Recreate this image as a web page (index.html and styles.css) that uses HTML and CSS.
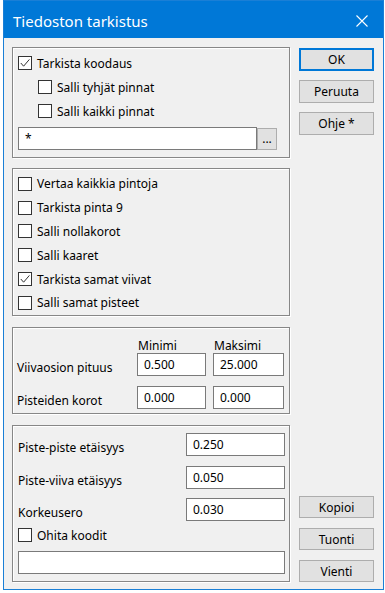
FILE: index.html
```html
<!DOCTYPE html>
<html>

<head>
<meta charset="UTF-8">
<link rel="stylesheet" href="styles.css">
</head>

<body>
<div class="window">
    <div class="titlebar">
        <span class="title">Tiedoston tarkistus</span>
        <svg class="close" width="12" height="12" viewBox="0 0 12 12">
            <path d="M0.5 0.5 L11.5 11.5 M11.5 0.5 L0.5 11.5" stroke="#fff" stroke-width="1.1" fill="none"/>
        </svg>
    </div>

    <div class="client">
        <div class="groups">

            <div class="group coding">
                <label class="check"><span class="box"><svg width="12" height="12" viewBox="0 0 12 12"><path d="M1.8 6 L4.6 9.2 L10.4 2.4" stroke="#333" stroke-width="1" fill="none"/></svg></span>Tarkista koodaus</label>
                <label class="check sub"><span class="box"></span>Salli tyhjät pinnat</label>
                <label class="check sub"><span class="box"></span>Salli kaikki pinnat</label>
                <div class="pattern-row">
                    <input class="field pattern" type="text" value="*">
                    <button class="btn browse">...</button>
                </div>
            </div>

            <div class="group options">
                <label class="check"><span class="box"></span>Vertaa kaikkia pintoja</label>
                <label class="check"><span class="box"></span>Tarkista pinta 9</label>
                <label class="check"><span class="box"></span>Salli nollakorot</label>
                <label class="check"><span class="box"></span>Salli kaaret</label>
                <label class="check"><span class="box"><svg width="12" height="12" viewBox="0 0 12 12"><path d="M1.8 6 L4.6 9.2 L10.4 2.4" stroke="#333" stroke-width="1" fill="none"/></svg></span>Tarkista samat viivat</label>
                <label class="check"><span class="box"></span>Salli samat pisteet</label>
            </div>

            <div class="group limits">
                <span></span>
                <span class="col-head">Minimi</span>
                <span class="col-head">Maksimi</span>

                <span class="row-label">Viivaosion pituus</span>
                <input class="field" type="text" value="0.500">
                <input class="field" type="text" value="25.000">

                <span class="row-label">Pisteiden korot</span>
                <input class="field" type="text" value="0.000">
                <input class="field" type="text" value="0.000">
            </div>

            <div class="group tolerances">
                <div class="tol-row">
                    <span class="row-label">Piste-piste etäisyys</span>
                    <input class="field tol" type="text" value="0.250">
                </div>
                <div class="tol-row">
                    <span class="row-label">Piste-viiva etäisyys</span>
                    <input class="field tol" type="text" value="0.050">
                </div>
                <div class="tol-row">
                    <span class="row-label">Korkeusero</span>
                    <input class="field tol" type="text" value="0.030">
                </div>
                <label class="check skip"><span class="box"></span>Ohita koodit</label>
                <input class="field codes" type="text" value="">
            </div>

        </div>

        <div class="actions">
            <div class="stack top">
                <button class="btn default">OK</button>
                <button class="btn">Peruuta</button>
                <button class="btn">Ohje *</button>
            </div>
            <div class="stack bottom">
                <button class="btn">Kopioi</button>
                <button class="btn">Tuonti</button>
                <button class="btn">Vienti</button>
            </div>
        </div>
    </div>
</div>
</body>

</html>
```

FILE: styles.css
```css
body
{
    margin: 0;
    background: #ffffff;
    font-family: "Noto Sans", "Open Sans", sans-serif;
    font-size: 12px;
    color: #000;
}

.window
{
    margin-left: 3px;
    width: 381px;
    height: 590px;
    box-sizing: border-box;
    border: 1px solid #1a7fd6;
    background: #f0f0f0;
    display: flex;
    flex-direction: column;
}

.titlebar
{
    height: 37px;
    flex: none;
    background: #0078d7;
    color: #fff;
    display: flex;
    align-items: center;
    justify-content: space-between;
    padding: 3px 15px 0 9px;
    box-sizing: border-box;
}

.title
{
    font-size: 15px;
}

.close
{
    display: block;
}

.client
{
    flex: 1;
    display: flex;
    gap: 9px;
    padding: 9px 9px 7px 8px;
}

.groups
{
    width: 278px;
    display: flex;
    flex-direction: column;
}

.group
{
    box-sizing: border-box;
    border: 1px solid #878787;
    box-shadow: 1px 1px 0 #fff, inset 1px 1px 0 #fff;
}

.coding
{
    height: 111px;
    padding: 3px 5px 0 5px;
}

.options
{
    height: 148px;
    margin-top: 10px;
    padding: 3px 5px 0 5px;
}

.options .check
{
    height: 23.8px;
}

/* min / max table */
.limits
{
    height: 87px;
    margin-top: 11px;
    padding: 10px 5px 0 4px;
    display: grid;
    grid-template-columns: 113px 69px 71px;
    grid-template-rows: 15px 23px 33px;
    column-gap: 7px;
}

.limits .col-head
{
    align-self: center;
    padding-left: 1px;
    line-height: 15px;
}

.limits .row-label
{
    align-self: end;
    line-height: 16px;
}

.limits .field
{
    align-self: end;
}

.tolerances
{
    height: 157px;
    margin-top: 11px;
    padding: 7px 4px 0 5px;
}

.tol-row
{
    display: flex;
    justify-content: space-between;
    align-items: flex-end;
    height: 23px;
}

.tol-row + .tol-row
{
    margin-top: 9.5px;
}

.tol-row .row-label
{
    line-height: 16px;
}

.check
{
    display: flex;
    align-items: center;
    gap: 5px;
    height: 24px;
}

.sub
{
    margin-left: 20px;
}

.skip
{
    height: 28px;
}

.box
{
    width: 14px;
    height: 14px;
    box-sizing: border-box;
    border: 1px solid #333;
    background: #fff;
    flex: none;
}

.box svg
{
    display: block;
}

.field
{
    box-sizing: border-box;
    height: 23px;
    border: 1px solid #7a7a7a;
    background: #fff;
    padding: 0 6px;
    margin: 0;
    font-family: inherit;
    font-size: 12px;
    color: #000;
    outline: none;
}

.pattern-row
{
    display: flex;
    align-items: center;
    margin-top: 4px;
}

.pattern
{
    width: 239px;
}

.browse
{
    width: 20px;
    height: 21px;
    margin-left: 7px;
    padding: 0 0 4px 0;
    line-height: 12px;
}

.tol
{
    width: 99px;
}

.codes
{
    width: 267px;
    margin-top: 2px;
}

.actions
{
    width: 75px;
    display: flex;
    flex-direction: column;
    justify-content: space-between;
}

.stack
{
    display: flex;
    flex-direction: column;
}

.stack.top
{
    padding-top: 1px;
    gap: 9px;
}

.stack.top .btn
{
    height: 23px;
}

.stack.bottom
{
    gap: 10px;
}

.btn
{
    box-sizing: border-box;
    height: 22px;
    border: 1px solid #adadad;
    background: #e1e1e1;
    font-family: inherit;
    font-size: 12px;
    color: #000;
    padding: 0;
    margin: 0;
}

.btn.default
{
    border: 2px solid #0078d7;
}
```
